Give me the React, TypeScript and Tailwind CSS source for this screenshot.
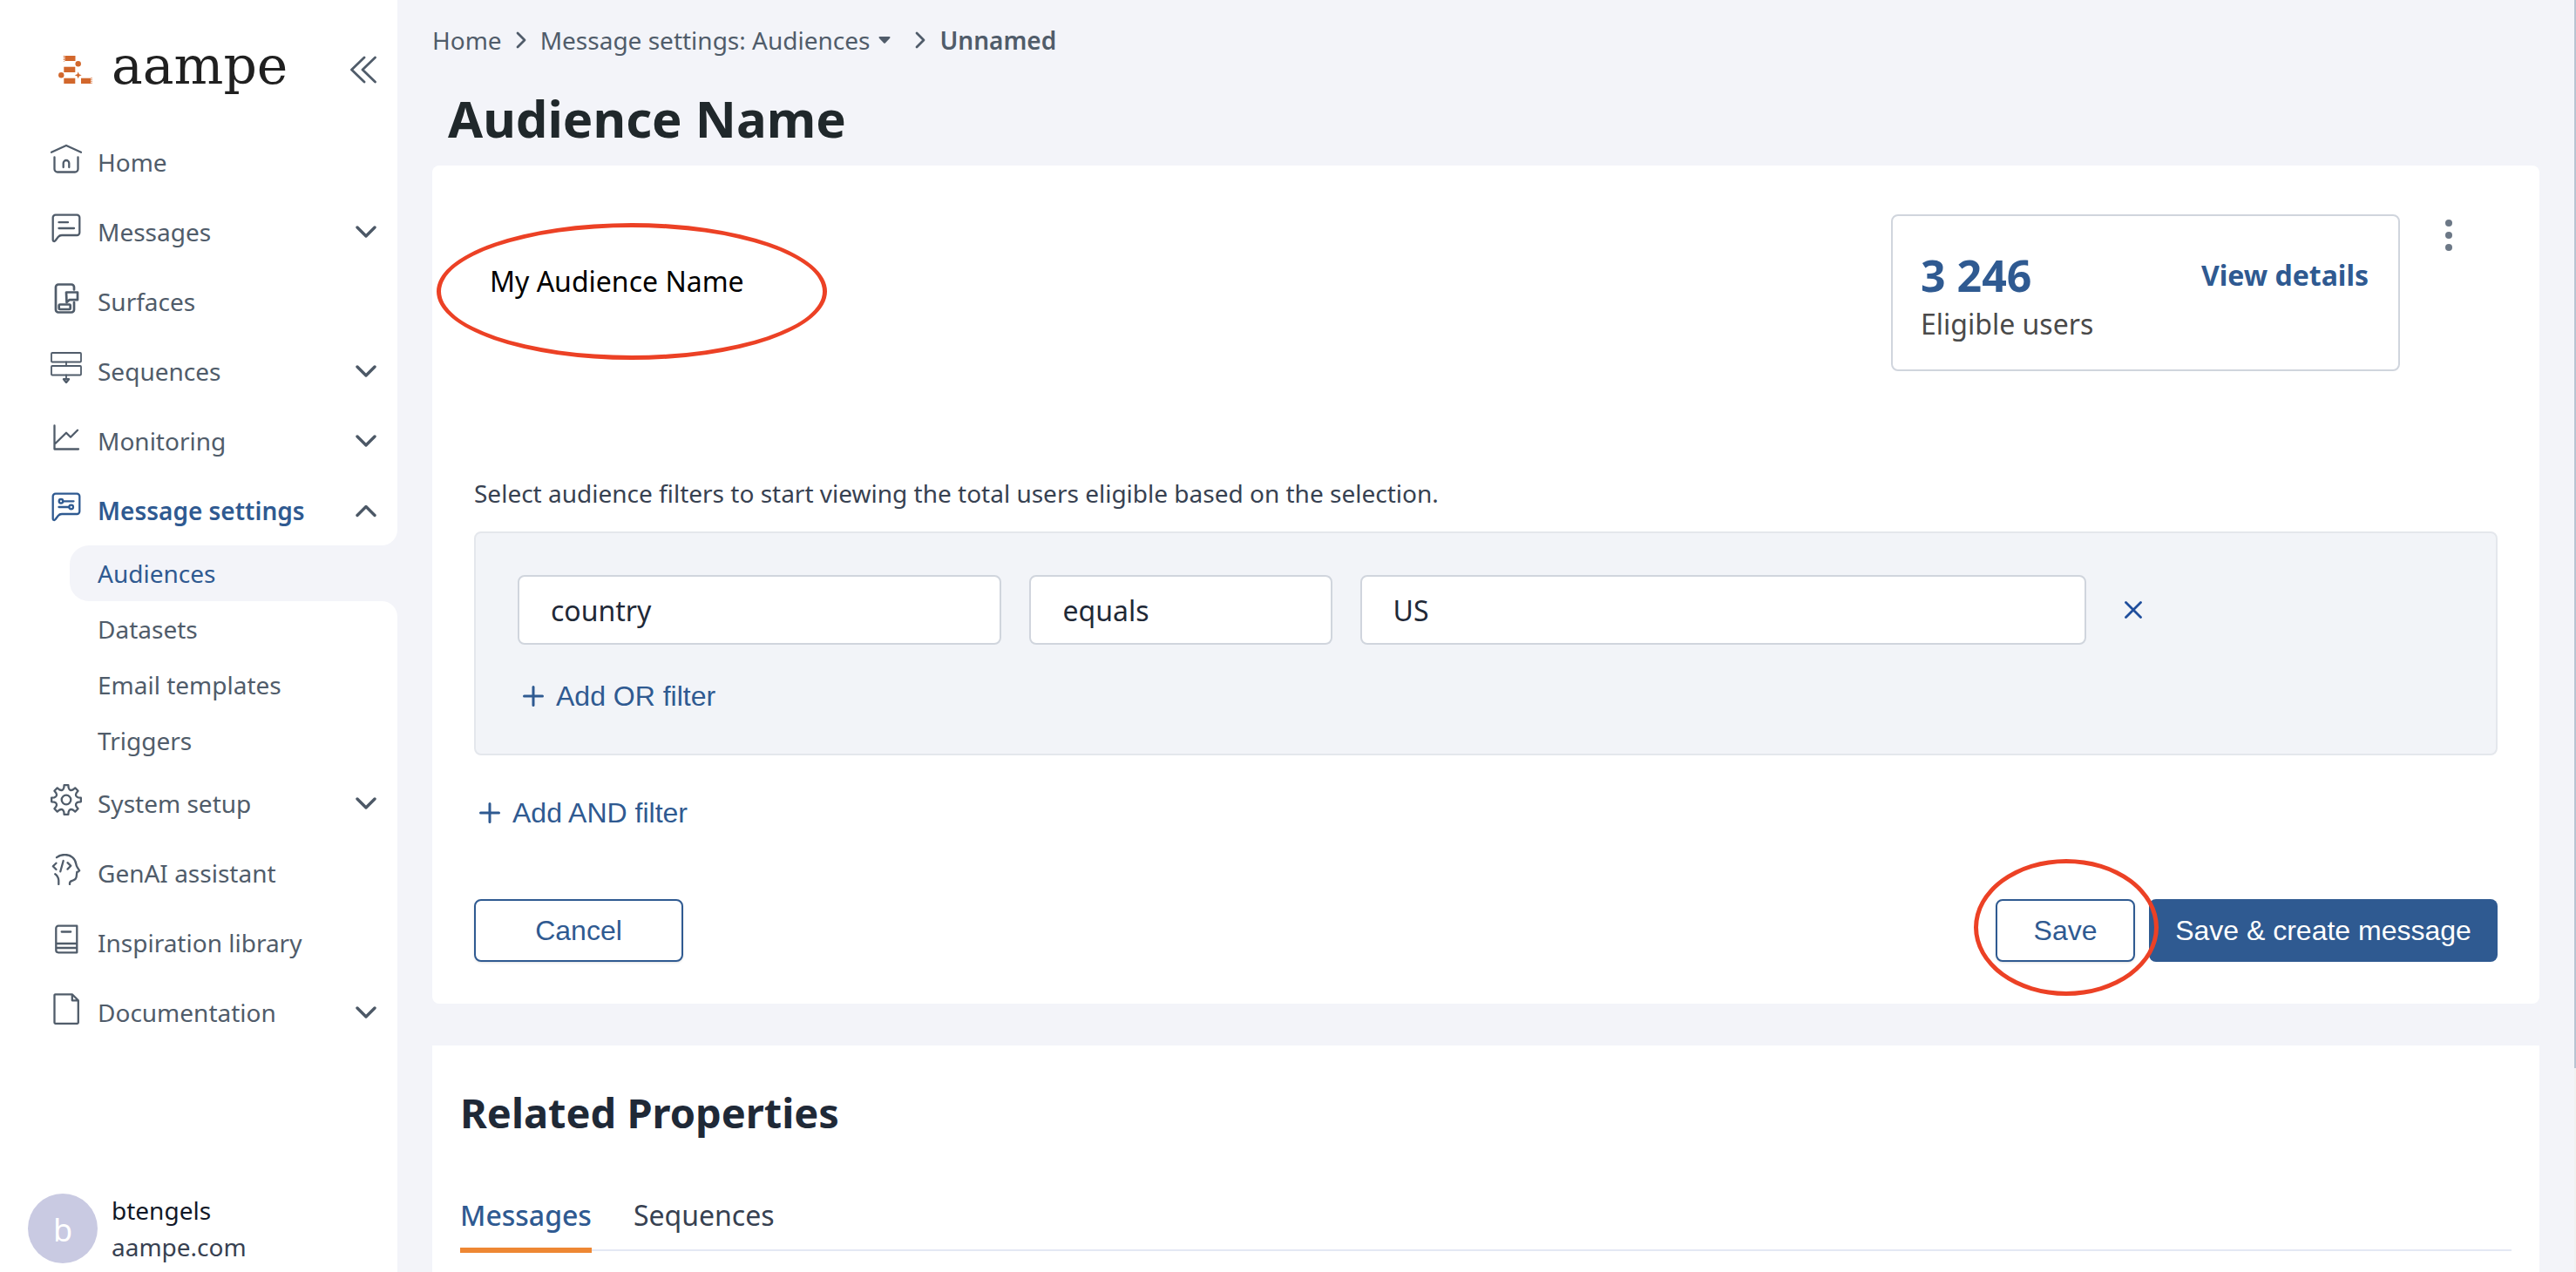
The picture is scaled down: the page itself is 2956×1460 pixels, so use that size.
import React, { useState } from "react";

function Icon({ children, width = 2.3 }: { children: React.ReactNode; width?: number }) {
  return (
    <svg
      viewBox="0 0 36 36"
      className="mb-2 size-9 shrink-0"
      fill="none"
      stroke="currentColor"
      strokeWidth={width}
      strokeLinecap="round"
      strokeLinejoin="round"
      aria-hidden="true"
    >
      {children}
    </svg>
  );
}

const bubble =
  "M5.7 2.7h24.6a3 3 0 0 1 3 3v17.3a3 3 0 0 1-3 3H13c-1.9 0-3.2.6-4.3 2l-3.2 4.2c-.9 1.3-2.8 1-2.8-.6V5.7a3 3 0 0 1 3-3z";

// Outline of an eight-toothed gear with scalloped valleys.
const gear = (() => {
  const at = (deg: number, r: number) => {
    const a = ((deg - 90) * Math.PI) / 180;
    return `${(18 + r * Math.cos(a)).toFixed(2)} ${(18 + r * Math.sin(a)).toFixed(2)}`;
  };
  let d = "";
  for (let k = 0; k < 8; k++) {
    const a = k * 45;
    d += `${k ? "L" : "M"}${at(a - 8, 17)}L${at(a + 8, 17)}L${at(a + 11, 14)}Q${at(a + 22.5, 10.5)} ${at(a + 34, 14)}`;
  }
  return d + "Z";
})();

const icons = {
  home: (
    <Icon>
      <path d="M1 10.8 18 3l17 7.8M4.5 16.5V30A3.5 3.5 0 0 0 8 33.5h20a3.5 3.5 0 0 0 3.5-3.5V16.5M14.7 28v-4.7a3.3 3.3 0 0 1 6.6 0V28" />
    </Icon>
  ),
  messages: (
    <Icon>
      <path d={bubble} />
      <path d="M9.5 11.2H20M9.5 18H27" />
    </Icon>
  ),
  surfaces: (
    <Icon width={2.7}>
      <path d="M27 8.5V5.5a3 3 0 0 0-3-3H9a3 3 0 0 0-3 3v26a3 3 0 0 0 3 3h15a3 3 0 0 0 3-3V23" />
      <path d="M18 11.5h13v8.7H21.5L18.5 23z" />
      <rect x="9.7" y="25.5" width="13" height="5.5" rx="1" />
    </Icon>
  ),
  sequences: (
    <Icon width={1.8}>
      <rect x="1" y="1" width="34" height="10.5" rx="1" />
      <rect x="1" y="16" width="34" height="10.5" rx="1" />
      <path d="M18 11.5V16M18 26.5V31" />
      <path d="M15 31.2h6L18 35z" strokeWidth="2.3" />
    </Icon>
  ),
  monitoring: (
    <Icon>
      <path d="M4.5 4.5v27H32M5.5 25 18 12.7l5 5 8-8" />
    </Icon>
  ),
  messageSettings: (
    <Icon>
      <path d={bubble} />
      <circle cx="12" cy="11.3" r="2.3" />
      <path d="M14.5 11.3H26.5M9.5 18H21" />
      <circle cx="23.7" cy="18" r="2.3" />
    </Icon>
  ),
  system: (
    <Icon>
      <path d={gear} />
      <circle cx="18" cy="18" r="5.3" />
    </Icon>
  ),
  genai: (
    <Icon>
      <path d="M7 4.2C10 1.8 13 1 16.500 1c7 0 12 4.5 12.9 11 .2 1.6.6 2.5 1.4 3.7l2.4 3.6c-.6 1.1-1.5 1.5-2.9 1.7l-.6 5.2c-.3 2.7-2 4-4.7 4.6-2 .5-3 1.2-3 3v1.2M5.3 23.3c1.7 1 4 4.2 4 7.2v4.5" />
      <path d="m6.500 10.7-3.7 3.6 3.7 3.7M14.7 8l-3.4 12.3M19.500 10.2l3.8 3.6-3.8 3.8" />
    </Icon>
  ),
  library: (
    <Icon>
      <path d="M9 2.7h21.3v30.6H9a2.7 2.7 0 0 1-2.7-2.7V5.4A2.7 2.7 0 0 1 9 2.700zM12.7 9.500h10.500M6.300 23h24M6.300 28h24" />
    </Icon>
  ),
  document: (
    <Icon>
      <path d="M5.500 1.300h19.300l7 7v25.500a1 1 0 0 1-1 1H5.500a1 1 0 0 1-1-1V2.300a1 1 0 0 1 1-1zM24.800 1.300v7h7" />
    </Icon>
  ),
};

function Chevron({ up = false }: { up?: boolean }) {
  return (
    <svg viewBox="0 0 24 24" className="ml-auto size-6 shrink-0 text-[#4c5866]" fill="none" stroke="currentColor" strokeWidth="3.4" strokeLinecap="round" strokeLinejoin="round" aria-hidden="true">
      <path d={up ? "M2 17.5 12 7.5l10 10" : "M2 7l10 10 10-10"} />
    </svg>
  );
}

function Separator() {
  return (
    <svg viewBox="0 0 12 20" className="h-5 w-3" fill="none" stroke="currentColor" strokeWidth="2.8" strokeLinecap="round" strokeLinejoin="round" aria-hidden="true">
      <path d="M2 2l8 8-8 8" />
    </svg>
  );
}

function Plus() {
  return (
    <svg viewBox="0 0 24 24" className="size-6" fill="none" stroke="currentColor" strokeWidth="3" strokeLinecap="round" aria-hidden="true">
      <path d="M12 1.5v21M1.5 12h21" />
    </svg>
  );
}

function Logo() {
  return (
    <svg viewBox="0 0 39 42" className="h-[42px] w-[39px]" fill="#d2672c" aria-hidden="true">
      <rect x="7.5" y="10" width="12" height="6" />
      <rect x="6.3" y="22.7" width="13" height="6.3" />
      <rect x="6.3" y="35.7" width="13" height="6.3" />
      <rect x="26" y="35.7" width="11" height="6.3" />
      <path d="M6.5 10v6.5M38 35.2V42" stroke="#d2672c" strokeWidth="1.5" strokeDasharray="1 1" />
      <circle cx="22.7" cy="19.3" r="3.2" />
      <circle cx="3.3" cy="32.3" r="3.2" />
      <path d="M22.7 28.3l1.1 2.9 2.9 1.1-2.9 1.1-1.1 2.9-1.1-2.9-2.9-1.1 2.9-1.1z" />
    </svg>
  );
}

type Item = { label: string; icon: keyof typeof icons; expandable?: boolean };

const before: Item[] = [
  { label: "Home", icon: "home" },
  { label: "Messages", icon: "messages", expandable: true },
  { label: "Surfaces", icon: "surfaces" },
  { label: "Sequences", icon: "sequences", expandable: true },
  { label: "Monitoring", icon: "monitoring", expandable: true },
];

const after: Item[] = [
  { label: "System setup", icon: "system", expandable: true },
  { label: "GenAI assistant", icon: "genai" },
  { label: "Inspiration library", icon: "library" },
  { label: "Documentation", icon: "document", expandable: true },
];

const rowClass = "flex h-20 w-full items-center gap-[18px] pr-6 pl-[58px] text-left";

function NavItem({ item }: { item: Item }) {
  const content = (
    <>
      {icons[item.icon]}
      <span>{item.label}</span>
      {item.expandable && <Chevron />}
    </>
  );
  return (
    <li>
      {item.expandable ? (
        <button type="button" aria-expanded="false" className={rowClass}>
          {content}
        </button>
      ) : (
        <a href="#" className={rowClass}>
          {content}
        </a>
      )}
    </li>
  );
}

function Sidebar() {
  return (
    <aside className="flex h-full w-[456px] shrink-0 flex-col bg-white text-[28px] leading-10 text-[#505c6a]">
      <div className="flex items-center pt-10 pr-6 pb-9 pl-[67px]">
        <a href="#" className="flex items-center gap-[22px]">
          <Logo />
          <span className="font-['DejaVu_Serif',serif] text-[60px] leading-[70px] text-[#202020]">aampe</span>
        </a>
        <button type="button" aria-label="Collapse sidebar" className="ml-auto">
          <svg viewBox="0 0 30 42" className="h-[42px] w-[30px]" fill="none" stroke="currentColor" strokeWidth="2.8" strokeLinecap="round" strokeLinejoin="round">
            <path d="M16 12 1.5 26 16 40M28.5 12 14 26l14.500 14" />
          </svg>
        </button>
      </div>
      <nav aria-label="Main">
        <ul>
          {before.map((item) => (
            <NavItem key={item.label} item={item} />
          ))}
          <li>
            <button type="button" aria-expanded="true" className={`${rowClass} font-semibold text-[#2f5a91]`}>
              {icons.messageSettings}
              <span>Message settings</span>
              <Chevron up />
            </button>
            <ul>
              <li className="relative ml-20 rounded-l-[22px] bg-[#f3f4f9]">
                <span className="absolute right-0 bottom-full size-[18px] bg-[#f3f4f9]">
                  <span className="block size-full rounded-br-[18px] bg-white" />
                </span>
                <a href="#" aria-current="page" className="flex h-16 items-center pl-8 text-[#2f5a91]">
                  Audiences
                </a>
                <span className="absolute top-full right-0 size-[18px] bg-[#f3f4f9]">
                  <span className="block size-full rounded-tr-[18px] bg-white" />
                </span>
              </li>
              {["Datasets", "Email templates", "Triggers"].map((label) => (
                <li key={label}>
                  <a href="#" className="flex h-16 items-center pl-28">
                    {label}
                  </a>
                </li>
              ))}
            </ul>
          </li>
          {after.map((item) => (
            <NavItem key={item.label} item={item} />
          ))}
        </ul>
      </nav>
      <div className="mt-auto flex items-center gap-4 pb-2 pl-8">
        <span className="flex size-20 items-center justify-center rounded-full bg-[#c9cae2] pt-1 text-[36px] text-white">b</span>
        <p className="leading-[42px] text-[#374151]">
          <span className="block text-[#111827]">btengels</span>
          <span className="block">aampe.com</span>
        </p>
      </div>
    </aside>
  );
}

const fieldClass =
  "h-20 w-full min-w-0 rounded-lg border-2 border-[#d0d5dd] bg-white px-9 text-[32px] text-[#1f2937] outline-none";
const outlineButton =
  "h-[72px] rounded-lg border-2 border-[#2f5a91] bg-white text-[#2f5a91] shadow-sm";
const addButton = "flex items-center gap-3.5 pl-1.5 leading-[48px] text-[#2f5a91]";

export default function App() {
  const [name, setName] = useState("My Audience Name");
  const [field, setField] = useState("country");
  const [operator, setOperator] = useState("equals");
  const [value, setValue] = useState("US");

  return (
    <div className="flex h-screen overflow-hidden bg-[#f3f4f9] font-['Noto_Sans',sans-serif]">
      <Sidebar />
      <main className="min-w-0 flex-1 overflow-hidden px-10">
        <nav aria-label="Breadcrumb" className="mt-[26px] flex items-center text-[28px] leading-10 text-[#505c6a]">
          <a href="#">Home</a>
          <span className="mx-4">
            <Separator />
          </span>
          <button type="button" className="flex items-center gap-2.5">
            Message settings: Audiences
            <svg viewBox="0 0 14 8" className="h-2 w-3.5" fill="currentColor" aria-hidden="true">
              <path d="M1.5 0h11a1 1 0 0 1 .7 1.7L8 7.3a1.4 1.4 0 0 1-2 0L.8 1.7A1 1 0 0 1 1.5 0z" />
            </svg>
          </button>
          <span className="mr-4 ml-7">
            <Separator />
          </span>
          <span aria-current="page" className="font-semibold">
            Unnamed
          </span>
        </nav>

        <h1 className="mt-8 mb-4 ml-[18px] text-[58px] leading-[76px] font-bold text-[#20282b]">Audience Name</h1>

        <section className="rounded-lg bg-white px-12 pt-14 pb-12">
          <div className="flex items-start">
            <div className="relative mt-[53px]">
              <input
                aria-label="Audience name"
                value={name}
                onChange={(e) => setName(e.target.value)}
                className="h-12 w-[400px] bg-transparent px-[18px] text-[32px] text-black outline-none"
              />
              <span className="pointer-events-none absolute -top-[43px] -left-[43px] h-[157px] w-[448px] rounded-[50%] border-[5px] border-[#ec4125]" />
            </div>
            <div className="ml-auto flex h-[180px] w-[584px] items-start justify-between rounded-lg border-2 border-[#d0d5dd] pt-[38px] pr-[34px] pl-8">
              <div>
                <p className="text-[50px] leading-[60px] font-bold text-[#2f5a91]">3 246</p>
                <p className="text-[32px] leading-[52px] text-[#4a4a4a]">Eligible users</p>
              </div>
              <a href="#" className="text-[32px] leading-[60px] font-bold text-[#2f5a91]">
                View details
              </a>
            </div>
            <button type="button" aria-label="More options" className="mr-9 ml-9">
              <svg viewBox="0 0 40 48" className="h-12 w-10" fill="#6c7886">
                <circle cx="20" cy="10" r="4" />
                <circle cx="20" cy="24" r="4" />
                <circle cx="20" cy="38" r="4" />
              </svg>
            </button>
          </div>

          <p className="mt-[120px] text-[28px] leading-10 text-[#374151]">
            Select audience filters to start viewing the total users eligible based on the selection.
          </p>

          <div className="mt-6 rounded-lg border-2 border-[#e4e7ec] bg-[#f2f4f8] px-12 pt-12 pb-[42px]">
            <div className="flex items-center">
              <div className="grid w-[81%] grid-cols-[8fr_5fr_12fr] gap-8">
                <input aria-label="Property" value={field} onChange={(e) => setField(e.target.value)} className={fieldClass} />
                <input aria-label="Operator" value={operator} onChange={(e) => setOperator(e.target.value)} className={fieldClass} />
                <input aria-label="Value" value={value} onChange={(e) => setValue(e.target.value)} className={fieldClass} />
              </div>
              <button type="button" aria-label="Remove filter" className="ml-11">
                <svg viewBox="0 0 20 20" className="size-5" fill="none" stroke="#1f4e9c" strokeWidth="2.8" strokeLinecap="round">
                  <path d="M1.5 1.5l17 17M18.5 1.5l-17 17" />
                </svg>
              </button>
            </div>
            <button type="button" className={`${addButton} mt-[35px] font-['Liberation_Sans',sans-serif] text-[32px]`}>
              <Plus />
              Add OR filter
            </button>
          </div>

          <div className="font-['Liberation_Sans',sans-serif] text-[32px]">
            <button type="button" className={`${addButton} mt-[42px]`}>
              <Plus />
              Add AND filter
            </button>
            <div className="mt-[75px] flex items-center gap-4">
              <button type="button" className={`${outlineButton} w-60`}>
                Cancel
              </button>
              <div className="relative z-10 ml-auto">
                <button type="button" className={`${outlineButton} w-40`}>
                  Save
                </button>
                <span className="pointer-events-none absolute -top-[46px] -left-[25px] h-[157px] w-[212px] rounded-[50%] border-[5px] border-[#ec4125]" />
              </div>
              <button type="button" className="h-[72px] w-[400px] rounded-lg bg-[#2f5a91] text-white">
                Save &amp; create message
              </button>
            </div>
          </div>
        </section>

        <section className="mt-12 bg-white px-8 pt-[47px] pb-16">
          <h2 className="text-[47px] leading-[60px] font-bold text-[#1f2937]">Related Properties</h2>
          <div role="tablist" className="mt-16 flex gap-12 border-b-2 border-[#e4e8f4] text-[32px] leading-[48px] text-[#374151]">
            <button type="button" role="tab" aria-selected="true" className="-mb-1 border-b-[6px] border-[#ee8733] pb-[13px] font-medium text-[#2f5a91]">
              Messages
            </button>
            <button type="button" role="tab" aria-selected="false" className="-mb-1 border-b-[6px] border-transparent pb-[13px]">
              Sequences
            </button>
          </div>
        </section>
      </main>
      <div className="h-full w-0.5 bg-[#f1f1f1]">
        <div className="h-[84%] bg-[#b9c4d1]" />
      </div>
    </div>
  );
}
